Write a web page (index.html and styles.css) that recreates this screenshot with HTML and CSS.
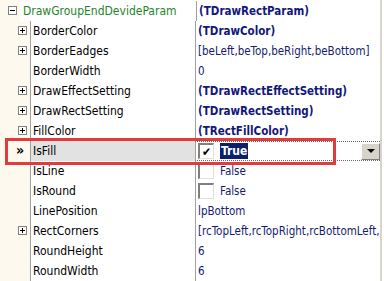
FILE: index.html
```html
<!DOCTYPE html>
<html lang="en">
  <head>
    <meta charset="UTF-8" />
    <title>Object Inspector</title>
    <link rel="stylesheet" href="styles.css">
  </head>
  <body>
    <div class="inspector">
      <div class="row group">
        <span class="gutter"><span class="box minus"></span></span>
        <span class="name">DrawGroupEndDevideParam</span>
        <span class="value obj">(TDrawRectParam)</span>
      </div>
      <div class="row">
        <span class="gutter"><span class="box plus"></span></span>
        <span class="name">BorderColor</span>
        <span class="value obj">(TDrawColor)</span>
      </div>
      <div class="row">
        <span class="gutter"><span class="box plus"></span></span>
        <span class="name">BorderEadges</span>
        <span class="value">[beLeft,beTop,beRight,beBottom]</span>
      </div>
      <div class="row">
        <span class="gutter"></span>
        <span class="name">BorderWidth</span>
        <span class="value">0</span>
      </div>
      <div class="row">
        <span class="gutter"><span class="box plus"></span></span>
        <span class="name">DrawEffectSetting</span>
        <span class="value obj">(TDrawRectEffectSetting)</span>
      </div>
      <div class="row">
        <span class="gutter"><span class="box plus"></span></span>
        <span class="name">DrawRectSetting</span>
        <span class="value obj">(TDrawRectSetting)</span>
      </div>
      <div class="row">
        <span class="gutter"><span class="box plus"></span></span>
        <span class="name">FillColor</span>
        <span class="value obj">(TRectFillColor)</span>
      </div>
      <div class="row active">
        <span class="gutter"><span class="marker">&raquo;</span></span>
        <span class="name">IsFill</span>
        <span class="value editor">
          <span class="check checked">&#10004;</span>
          <span class="selected">True</span>
          <span class="spacer"></span>
          <span class="dropdown"></span>
        </span>
      </div>
      <div class="row">
        <span class="gutter"></span>
        <span class="name">IsLine</span>
        <span class="value"><span class="check"></span>False</span>
      </div>
      <div class="row">
        <span class="gutter"></span>
        <span class="name">IsRound</span>
        <span class="value"><span class="check"></span>False</span>
      </div>
      <div class="row">
        <span class="gutter"></span>
        <span class="name">LinePosition</span>
        <span class="value">lpBottom</span>
      </div>
      <div class="row">
        <span class="gutter"><span class="box plus"></span></span>
        <span class="name">RectCorners</span>
        <span class="value">[rcTopLeft,rcTopRight,rcBottomLeft,rcBottomRight]</span>
      </div>
      <div class="row">
        <span class="gutter"></span>
        <span class="name">RoundHeight</span>
        <span class="value">6</span>
      </div>
      <div class="row">
        <span class="gutter"></span>
        <span class="name">RoundWidth</span>
        <span class="value">6</span>
      </div>

      <!-- anotación sobre la fila IsFill -->
      <div class="highlight"></div>
    </div>
  </body>
</html>
```

FILE: styles.css
```css
body {
  margin: 0;
  width: 384px;
  height: 281px;
  overflow: hidden;
  background-color: #fff;
  font-family: "DejaVu Sans Condensed", "DejaVu Sans", sans-serif;
  font-size: 12px;
}

.inspector {
  position: relative;
  width: 382px;
  height: 281px;
  padding-top: 1px;
  box-sizing: border-box;
  border-right: 2px solid #d8d4cc;
  background: linear-gradient(to right, #fdf9ee 30px, #fff 30px);
}

.row {
  display: flex;
  height: 20px;
  align-items: stretch;
}

.gutter {
  width: 30px;
  flex: none;
  display: flex;
  align-items: center;
  position: relative;
}

.name {
  width: 162px;
  flex: none;
  display: flex;
  align-items: center;
  padding-left: 2px;
  border-left: 1px solid #a0a0a0;
  color: #000;
  white-space: nowrap;
  overflow: hidden;
}

.value {
  flex: 1;
  display: flex;
  align-items: center;
  padding-left: 2px;
  border-left: 1px solid #a0a0a0;
  color: #141c6e;
  font-size: 11.5px;
  white-space: nowrap;
  overflow: hidden;
}

.value.obj {
  font-weight: bold;
  color: #12177a;
}

/* fila del grupo raíz */
.group .gutter {
  width: 20px;
}

.group .name {
  width: 173px;
  border-left: none;
  padding-left: 3px;
  color: #23862a;
  background-color: #fff;
}

.box {
  position: absolute;
  top: 5px;
  width: 9px;
  height: 9px;
  box-sizing: border-box;
  border: 1px solid #808080;
  background-color: #fff;
}

.box::before,
.box::after {
  content: "";
  position: absolute;
  background-color: #000;
}

.box::before {
  left: 1px;
  top: 3px;
  width: 5px;
  height: 1px;
}

.plus::after {
  left: 3px;
  top: 1px;
  width: 1px;
  height: 5px;
}

.minus {
  left: 8px;
}

.plus {
  left: 18px;
}

.marker {
  position: absolute;
  left: 16px;
  top: 1px;
  font-weight: bold;
  font-size: 14px;
  color: #000;
}

/* fila activa */
.active .name {
  background-color: #e2e2e2;
}

.editor {
  border-top: 1px dotted #666;
  border-bottom: 1px dotted #666;
  box-sizing: border-box;
}

.check {
  width: 16px;
  height: 16px;
  flex: none;
  box-sizing: border-box;
  margin-right: 6px;
  border-top: 2px solid #808080;
  border-left: 2px solid #808080;
  border-right: 1px solid #e4e0d8;
  border-bottom: 1px solid #e4e0d8;
  background-color: #fff;
  font-size: 12px;
  line-height: 14px;
  text-align: center;
  color: #000;
}

.selected {
  background-color: #0c1f6b;
  color: #fff;
  font-weight: bold;
  font-size: 12px;
  padding: 1px 1px;
  line-height: 14px;
}

.spacer {
  flex: 1;
}

.dropdown {
  width: 19px;
  height: 17px;
  flex: none;
  box-sizing: border-box;
  background-color: #d8d4cc;
  border-top: 1px solid #fff;
  border-left: 1px solid #fff;
  border-right: 1px solid #808080;
  border-bottom: 1px solid #808080;
  display: flex;
  align-items: center;
  justify-content: center;
}

.dropdown::after {
  content: "";
  border-left: 4px solid transparent;
  border-right: 4px solid transparent;
  border-top: 4px solid #000;
}

.highlight {
  position: absolute;
  left: 5px;
  top: 138px;
  width: 331px;
  height: 27px;
  box-sizing: border-box;
  border: 3px solid #e23b3b;
}
```
